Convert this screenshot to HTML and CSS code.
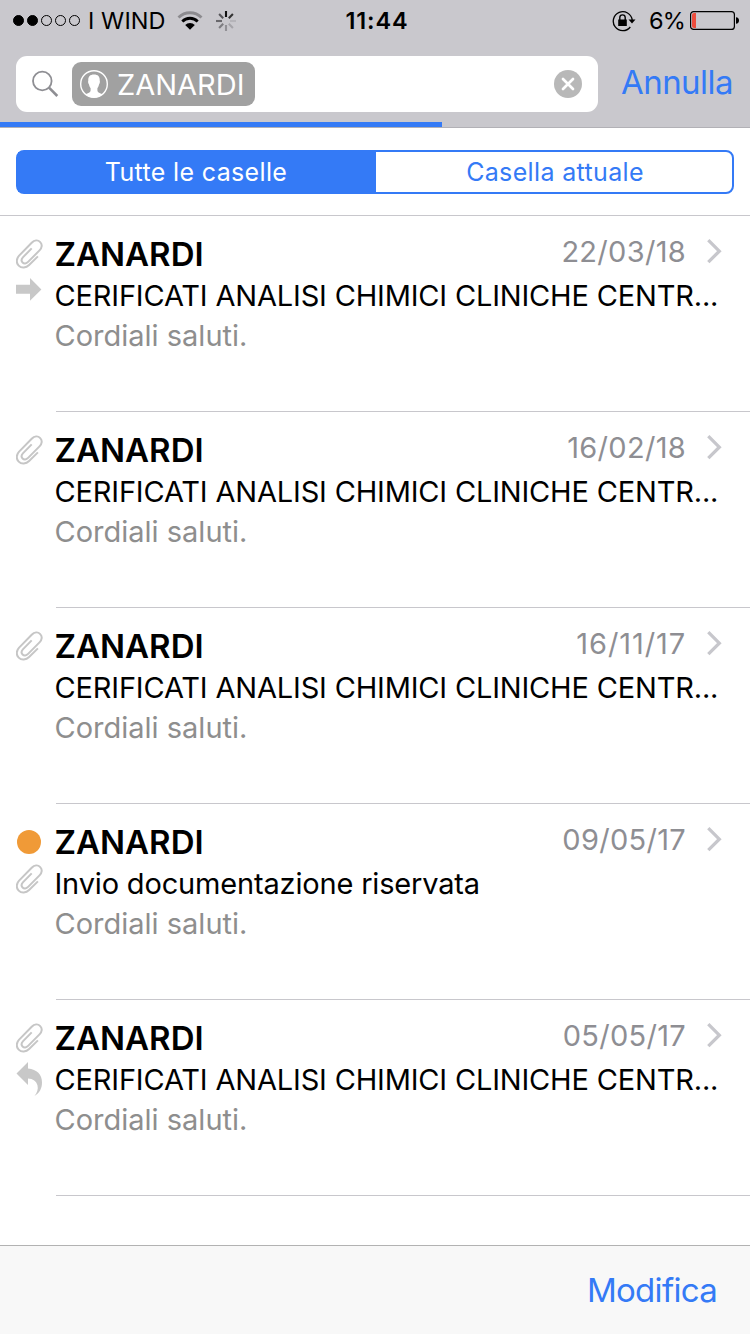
FILE: index.html
```html
<!DOCTYPE html>
<html lang="it">
<head>
  <meta charset="utf-8">
  <title>Mail</title>
  <link rel="stylesheet" href="styles.css">
</head>
<body>
  <!-- shared icons -->
  <svg class="sprite" width="0" height="0">
    <symbol id="clip" viewBox="0.7 0 28 30">
      <path d="M22.6 17.400L13.800 26C10.800 29 6.200 29.400 3.400 26.600C.6 23.800 1 19.600 3.800 16.600L16.400 3.800C19 1.200 22.600 .8 24.900 3.100C27.200 5.400 26.800 8.800 24.200 11.400L12.800 22.900C11 24.700 8.800 25 7.300 23.500C5.800 22 6.100 19.900 7.800 18.100L16.400 9.400" fill="none" stroke="#c6c6c6" stroke-width="2"/>
    </symbol>
    <symbol id="forward" viewBox="0 0 26 23">
      <path d="M0 6.8H14V0L25.4 11.5L14 22.8V15.8H0Z" fill="#c8c8c8"/>
    </symbol>
    <symbol id="reply" viewBox="0 0 27 35">
      <path d="M.5 11.500L12 0V6.600C21 7.400 26 12.600 26 20.500C26 26.500 23.500 31 18.500 34C21.200 30.500 22.400 27.200 21.500 23.500C20.400 19.200 17 16.800 12 16.600V23Z" fill="#c8c8c8"/>
    </symbol>
    <symbol id="chevron" viewBox="0 0 15 25">
      <path d="M1.300 1.200L12.300 12.200L1.300 23.200" fill="none" stroke="#c7c7cc" stroke-width="3.300"/>
    </symbol>
  </svg>

  <header class="header">
    <div class="status-bar">
      <div class="status-left">
        <div class="signal">
          <i class="on"></i><i class="on"></i><i></i><i></i><i></i>
        </div>
        <span class="carrier">I WIND</span>
        <svg class="wifi" width="26" height="20" viewBox="0 0 26 20">
          <path d="M1.500 6.500A16.300 16.300 0 0 1 24.500 6.500" fill="none" stroke="#8c8b8f" stroke-width="2.800"/>
          <path d="M5.300 10.400A11 11 0 0 1 20.700 10.400" fill="none" stroke="#000" stroke-width="2.800"/>
          <path d="M8.200 13.900A6.800 6.800 0 0 1 17.800 13.900L13 18.800Z"/>
        </svg>
        <svg class="spinner" width="20" height="20" viewBox="-10 -10 20 20" stroke-width="2.100">
          <path d="M0-4V-10" stroke="#111"/>
          <path d="M2.800-2.800L6.900-6.900" stroke="#333"/>
          <path d="M4 0H10" stroke="#b5b4b9"/>
          <path d="M2.800 2.800L6.900 6.900" stroke="#a5a4a9"/>
          <path d="M0 4V10" stroke="#929196"/>
          <path d="M-2.800 2.800L-6.900 6.900" stroke="#7d7c80"/>
          <path d="M-4 0H-10" stroke="#69686c"/>
          <path d="M-2.800-2.800L-6.900-6.900" stroke="#555458"/>
        </svg>
      </div>
      <span class="clock">11:44</span>
      <div class="status-right">
        <svg class="lock" width="24" height="22" viewBox="0 0 24 22">
          <path d="M18.300 17A9.500 9.500 0 1 1 20.200 10" fill="none" stroke="#000" stroke-width="1.300"/>
          <path d="M16.500 9.500H23.500L20 13.500Z"/>
          <path d="M6.200 9.500H14.800V16H6.200Z"/>
          <path d="M7.800 10V7.600A2.700 2.700 0 0 1 13.200 7.600V10" fill="none" stroke="#000" stroke-width="1.400"/>
        </svg>
        <span class="percent">6%</span>
        <svg class="battery" width="49" height="19" viewBox="0 0 49 19">
          <rect x=".6" y=".6" width="43.800" height="17.800" rx="3" fill="none" stroke="#000" stroke-width="1.200"/>
          <path d="M6 2V17H4Q2 17 2 15V4Q2 2 4 2Z" fill="#ec4d3d"/>
          <path d="M46 6.200Q49 6.500 49 9.500T46 12.800Z"/>
        </svg>
      </div>
    </div>
    <div class="search-row">
      <div class="search-field">
        <svg class="magnifier" width="28" height="28" viewBox="0 0 28 28" fill="none" stroke="#8e8e93">
          <circle cx="10.300" cy="11" r="9.300" stroke-width="1.800"/>
          <path d="M17 17.700L25.300 26" stroke-width="2.600"/>
        </svg>
        <div class="token">
          <svg width="28" height="28" viewBox="0 0 28 28">
            <circle cx="14" cy="14" r="13.300" fill="none" stroke="#fff" stroke-width="1.400"/>
            <path d="M14 4.500C18 4.500 20 6.600 19.700 10.500C20.200 11.200 19.800 13.600 19.100 14.200C18.700 16.200 18 17.400 17.400 18.200V20.500C17.600 22.800 20 23.300 22.500 24.200Q19 27.600 14 27.600Q9 27.600 5.500 24.200C8 23.300 10.400 22.800 10.600 20.500V18.200C10 17.400 9.300 16.200 8.900 14.200C8.200 13.600 7.800 11.200 8.300 10.500C8 6.600 10 4.500 14 4.500Z" fill="#fff"/>
          </svg>
          <span>ZANARDI</span>
        </div>
        <svg class="clear" width="28" height="28" viewBox="0 0 28 28">
          <circle cx="14" cy="14" r="14" fill="#b8b8b8"/>
          <path d="M9 9L19 19M19 9L9 19" stroke="#fff" stroke-width="2.700" stroke-linecap="round"/>
        </svg>
      </div>
      <a class="cancel">Annulla</a>
    </div>
    <div class="progress"></div>
  </header>

  <div class="scope">
    <div class="segments">
      <div class="segment selected"><span>Tutte le caselle</span></div>
      <div class="segment"><span>Casella attuale</span></div>
    </div>
  </div>

  <main class="messages">
    <article class="message">
      <div class="marks">
        <svg class="clip"><use href="#clip"/></svg>
        <svg class="forward"><use href="#forward"/></svg>
      </div>
      <div class="body">
        <div class="top">
          <h2>ZANARDI</h2>
          <time>22/03/18</time>
          <svg class="chevron"><use href="#chevron"/></svg>
        </div>
        <p class="subject">CERIFICATI ANALISI CHIMICI CLINICHE CENTR...</p>
        <p class="preview">Cordiali saluti.</p>
      </div>
    </article>

    <article class="message">
      <div class="marks">
        <svg class="clip"><use href="#clip"/></svg>
      </div>
      <div class="body">
        <div class="top">
          <h2>ZANARDI</h2>
          <time>16/02/18</time>
          <svg class="chevron"><use href="#chevron"/></svg>
        </div>
        <p class="subject">CERIFICATI ANALISI CHIMICI CLINICHE CENTR...</p>
        <p class="preview">Cordiali saluti.</p>
      </div>
    </article>

    <article class="message">
      <div class="marks">
        <svg class="clip"><use href="#clip"/></svg>
      </div>
      <div class="body">
        <div class="top">
          <h2>ZANARDI</h2>
          <time class="loose">16/11/17</time>
          <svg class="chevron"><use href="#chevron"/></svg>
        </div>
        <p class="subject">CERIFICATI ANALISI CHIMICI CLINICHE CENTR...</p>
        <p class="preview">Cordiali saluti.</p>
      </div>
    </article>

    <article class="message">
      <div class="marks">
        <i class="flag"></i>
        <svg class="clip"><use href="#clip"/></svg>
      </div>
      <div class="body">
        <div class="top">
          <h2>ZANARDI</h2>
          <time>09/05/17</time>
          <svg class="chevron"><use href="#chevron"/></svg>
        </div>
        <p class="subject">Invio documentazione riservata</p>
        <p class="preview">Cordiali saluti.</p>
      </div>
    </article>

    <article class="message">
      <div class="marks">
        <svg class="clip"><use href="#clip"/></svg>
        <svg class="reply"><use href="#reply"/></svg>
      </div>
      <div class="body">
        <div class="top">
          <h2>ZANARDI</h2>
          <time>05/05/17</time>
          <svg class="chevron"><use href="#chevron"/></svg>
        </div>
        <p class="subject">CERIFICATI ANALISI CHIMICI CLINICHE CENTR...</p>
        <p class="preview">Cordiali saluti.</p>
      </div>
    </article>
  </main>

  <footer class="toolbar">
    <a class="edit">Modifica</a>
  </footer>
</body>
</html>
```

FILE: styles.css
```css
* {
  box-sizing: border-box;
}
body {
  font-family: Inter, "Liberation Sans", sans-serif;
  margin: 0;
  height: 1334px;
  display: flex;
  flex-direction: column;
  overflow: hidden;
  color: #000;
  background: #fff;
}
svg {
  display: block;
  flex: none;
}
h2, p {
  margin: 0;
}
.sprite {
  position: absolute;
}

/* header */
.header {
  height: 128px;
  background: #c9c8cd;
  border-bottom: 1px solid #b2b1b6;
}
.status-bar {
  display: grid;
  grid-template-columns: 1fr auto 1fr;
  align-items: center;
  height: 41px;
  padding: 0 11px 0 13px;
  margin-bottom: 15px;
  font-size: 23.5px;
  line-height: 41px;
}
.status-left, .status-right {
  display: flex;
  align-items: center;
}
.status-right {
  justify-content: flex-end;
}
.signal {
  display: flex;
  gap: 3px;
}
.signal i {
  width: 11px;
  height: 11px;
  border: 1px solid #000;
  border-radius: 50%;
}
.signal .on {
  background: #000;
}
.carrier {
  margin-left: 8px;
  width: 77px;
  letter-spacing: 0.1px;
  white-space: nowrap;
}
.wifi {
  margin-left: 12px;
}
.spinner {
  margin-left: 13px;
}
.clock {
  padding-left: 2px;
  font-weight: 600;
  letter-spacing: 0.9px;
}
.lock {
  margin-right: 13px;
}
.percent {
  width: 36px;
  margin-right: 5px;
  letter-spacing: -0.7px;
}
.search-row {
  display: flex;
  height: 56px;
  padding-left: 16px;
}
.search-field {
  display: flex;
  align-items: center;
  width: 582px;
  border-radius: 11px;
  padding: 0 16px;
  background: #fff;
}
.magnifier {
  margin-right: 12px;
}
.token {
  display: flex;
  align-items: center;
  width: 183px;
  height: 44px;
  padding-left: 8px;
  gap: 9px;
  border-radius: 9px;
  background: #a1a1a1;
  color: #fff;
  font-size: 29px;
}
.clear {
  margin-left: auto;
}
.cancel {
  margin-left: 23px;
  font-size: 33px;
  line-height: 52px;
  letter-spacing: -0.55px;
  color: #347af6;
}
.progress {
  width: 442px;
  height: 5px;
  margin-top: 10px;
  background: #347af6;
}

/* mailbox scope */
.scope {
  height: 88px;
  padding: 22px 16px;
  border-bottom: 1px solid #c8c7cc;
}
.segments {
  display: flex;
  height: 44px;
  border: 2px solid #347af6;
  border-radius: 8px;
  font-size: 25px;
  letter-spacing: 0.35px;
}
.segment {
  flex: 1;
  padding-left: 2px;
  line-height: 41px;
  text-align: center;
  color: #347af6;
}
.selected {
  flex: none;
  width: 358px;
  padding: 0 2px 0 0;
  background: #347af6;
  color: #fff;
}

/* messages */
.messages {
  flex: 1;
}
.message {
  display: flex;
  height: 196px;
  padding-left: 16px;
}
.marks {
  display: flex;
  flex-direction: column;
  gap: 10px;
  width: 40px;
  padding-top: 23px;
}
.clip {
  width: 28px;
  height: 30px;
  margin-bottom: -1px;
}
.forward {
  width: 26px;
  height: 23px;
}
.reply {
  width: 27px;
  height: 35px;
}
.flag {
  width: 24px;
  height: 24px;
  margin: 3px 0 0 1px;
  border-radius: 50%;
  background: #f09a37;
}
.body {
  flex: 1;
  padding-top: 16px;
  border-bottom: 1px solid #c8c7cc;
  white-space: nowrap;
}
.body h2, .body p {
  margin-left: -1.5px;
}
.top {
  display: flex;
  height: 44px;
}
.top h2 {
  flex: 1;
  font-size: 33px;
  font-weight: 600;
  line-height: 44px;
}
.top time {
  font-size: 29px;
  line-height: 40px;
  letter-spacing: 0.3px;
  color: #8e8e93;
}
.top .loose {
  letter-spacing: 0.9px;
}
.chevron {
  width: 15px;
  height: 25px;
  margin: 7px 28px 0 21px;
}
.subject, .preview {
  font-size: 29px;
  line-height: 40px;
}
.subject {
  letter-spacing: -0.17px;
}
.preview {
  color: #8e8e8e;
}

/* toolbar */
.toolbar {
  display: flex;
  justify-content: flex-end;
  height: 89px;
  padding-right: 33px;
  background: #f8f8f8;
  border-top: 1px solid #b2b2b2;
}
.edit {
  font-size: 33px;
  line-height: 88px;
  letter-spacing: -0.7px;
  color: #347af6;
}
```
